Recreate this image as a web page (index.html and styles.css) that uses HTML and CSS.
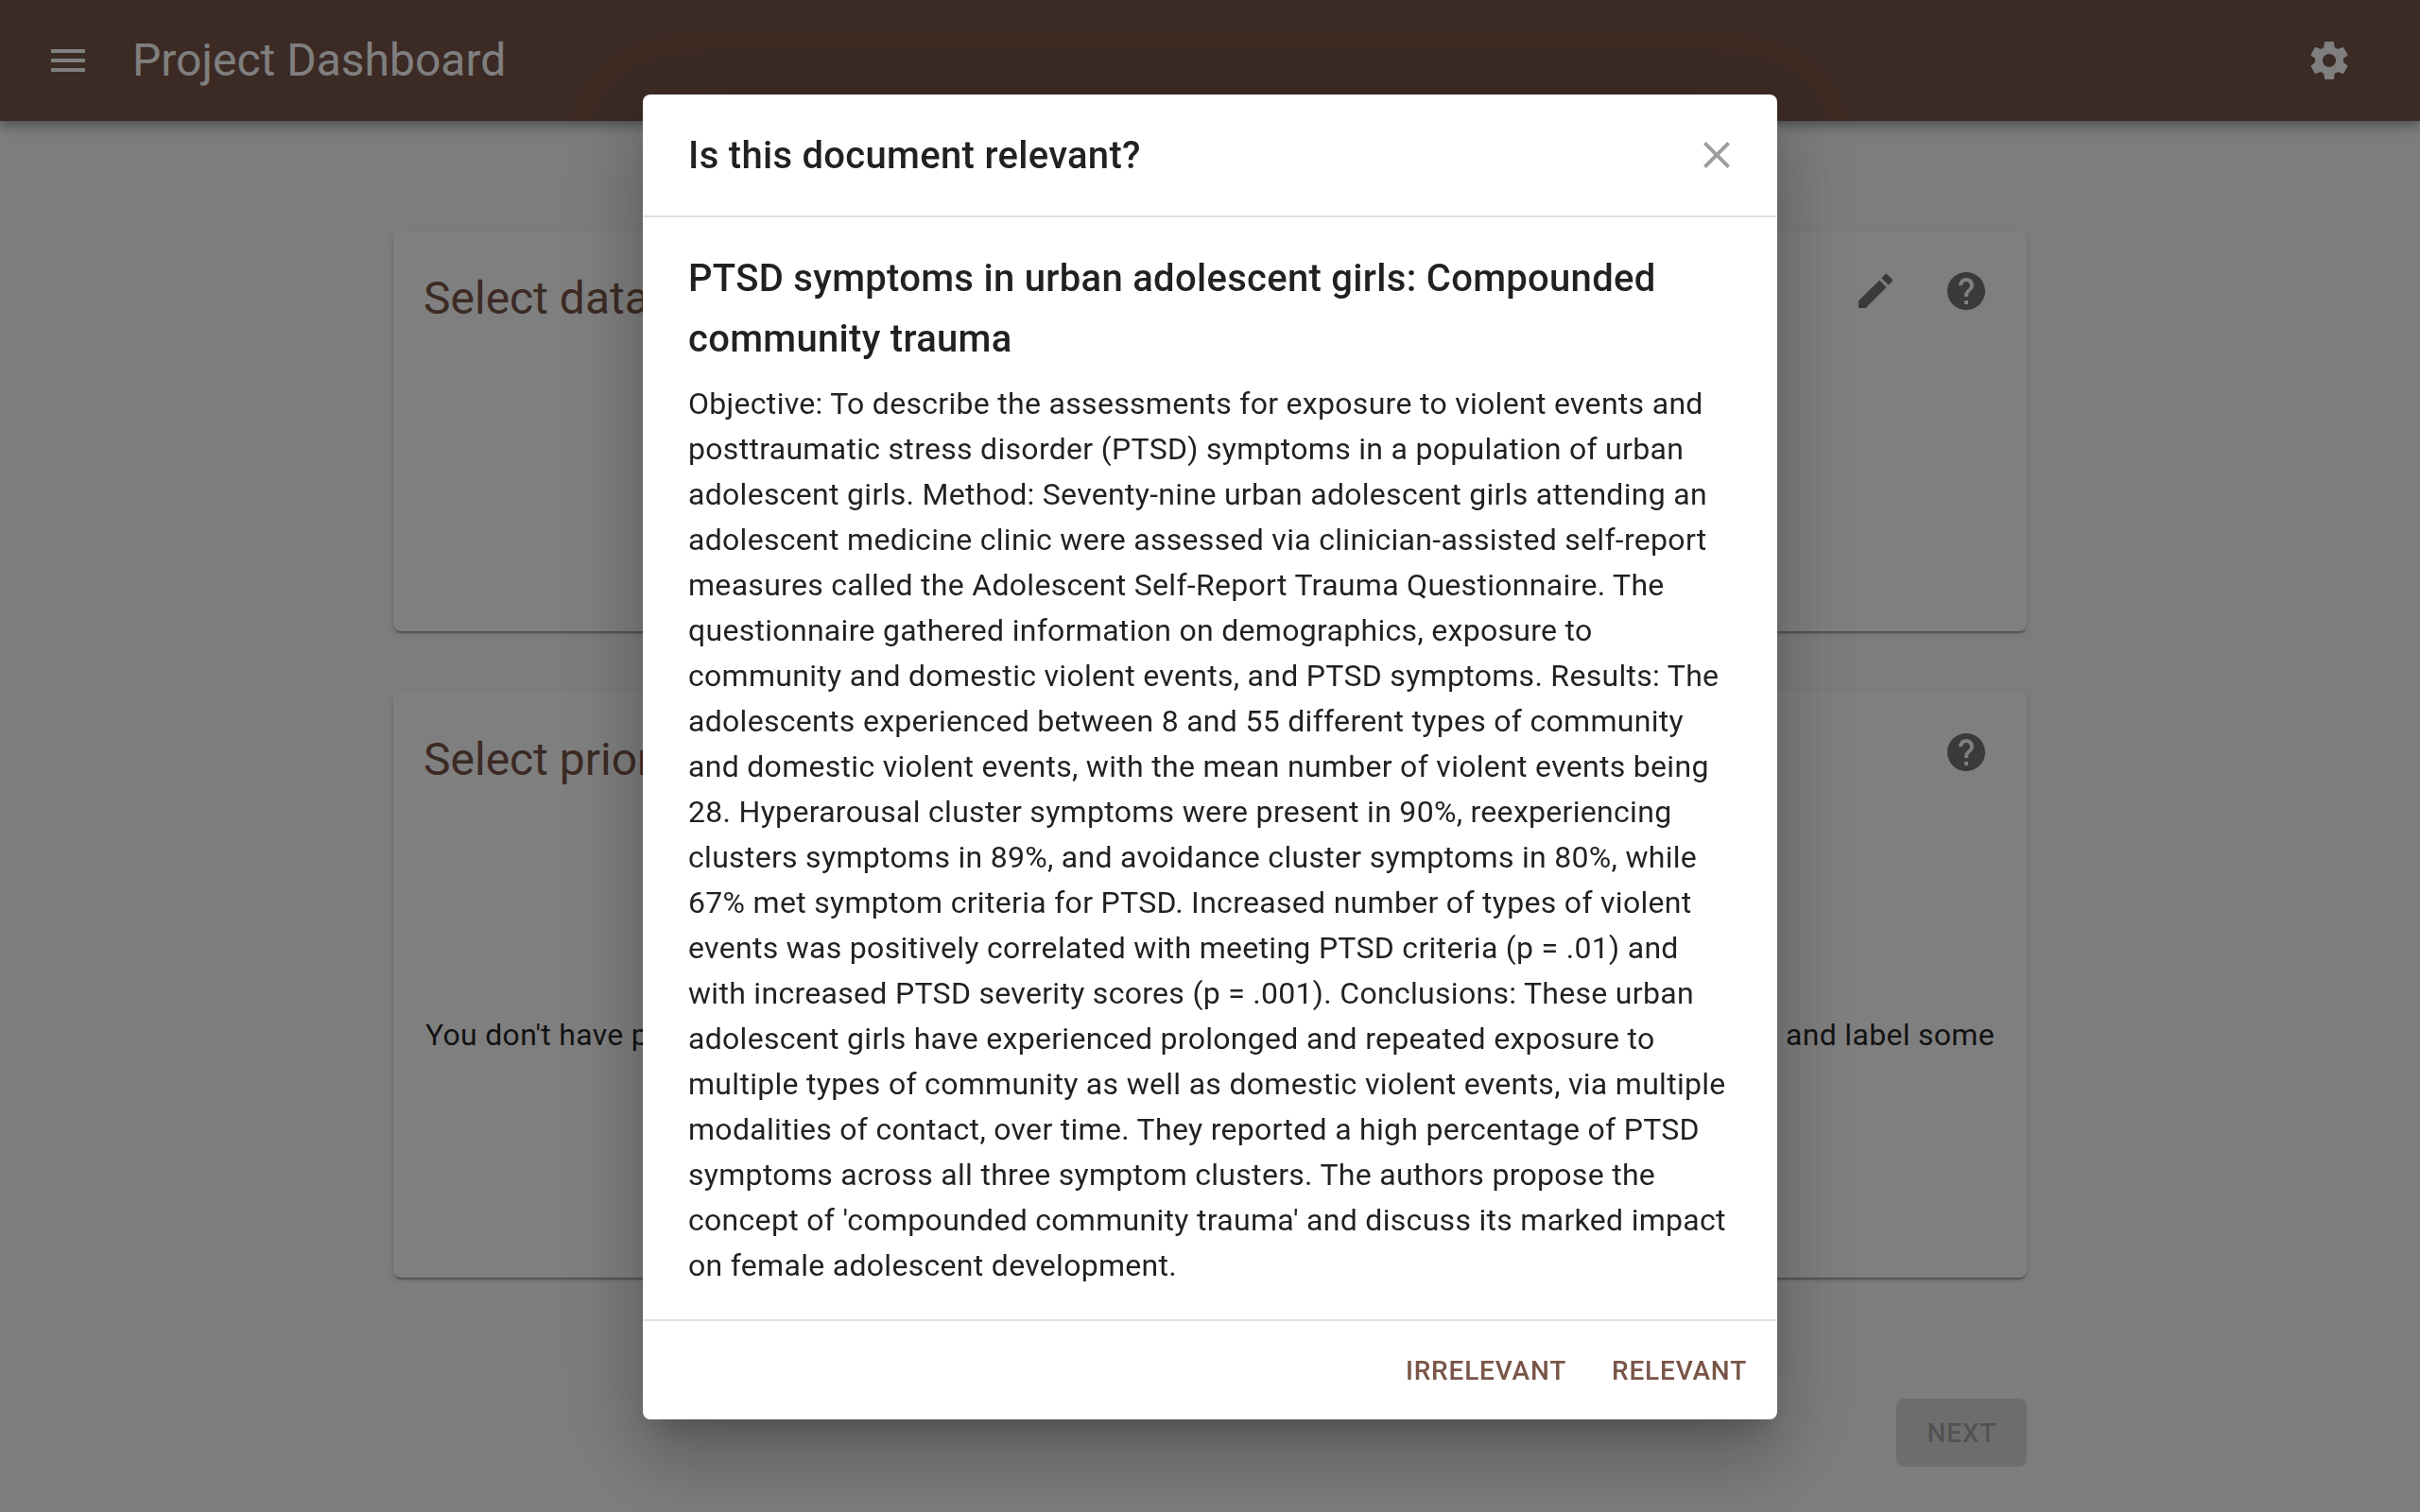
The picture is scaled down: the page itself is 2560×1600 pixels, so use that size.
FILE: index.html
```html
<!DOCTYPE html>
<html lang="en">
<head>
<meta charset="utf-8">
<title>Project Dashboard</title>
<link rel="stylesheet" href="styles.css">
</head>
<body>
<header class="app-bar">
  <svg class="icon" viewBox="0 0 24 24"><path d="M3 18h18v-2H3v2zm0-5h18v-2H3v2zm0-7v2h18V6H3z"/></svg>
  <h1 class="app-title">Project Dashboard</h1>
  <svg class="icon" viewBox="0 0 24 24"><path d="M19.43 12.98c.04-.32.07-.64.07-.98s-.03-.66-.07-.98l2.11-1.65c.19-.15.24-.42.12-.64l-2-3.46c-.12-.22-.39-.3-.61-.22l-2.49 1c-.52-.4-1.08-.73-1.69-.98l-.38-2.65C14.46 2.18 14.25 2 14 2h-4c-.25 0-.46.18-.49.42l-.38 2.65c-.61.25-1.17.59-1.69.98l-2.49-1c-.23-.09-.49 0-.61.22l-2 3.46c-.13.22-.07.49.12.64l2.11 1.65c-.04.32-.07.65-.07.98s.03.66.07.98l-2.11 1.65c-.19.15-.24.42-.12.64l2 3.46c.12.22.39.3.61.22l2.49-1c.52.4 1.08.73 1.69.98l.38 2.65c.03.24.24.42.49.42h4c.25 0 .46-.18.49-.42l.38-2.65c.61-.25 1.17-.59 1.69-.98l2.49 1c.23.09.49 0 .61-.22l2-3.46c.12-.22.07-.49-.12-.64l-2.11-1.65zM12 15.5c-1.93 0-3.5-1.57-3.5-3.5s1.57-3.5 3.5-3.5 3.5 1.57 3.5 3.5-1.57 3.5-3.5 3.5z"/></svg>
</header>
<main class="page">
  <section class="card card-dataset">
    <div class="card-header">
      <h2 class="card-title">Select dataset</h2>
      <div class="card-tools">
        <svg class="icon" viewBox="0 0 24 24"><path d="M3 17.25V21h3.75L17.81 9.94l-3.75-3.75L3 17.25zM20.71 7.04c.39-.39.39-1.02 0-1.41l-2.34-2.34a.9959.9959 0 0 0-1.41 0l-1.83 1.83 3.75 3.75 1.83-1.83z"/></svg>
        <svg class="icon" viewBox="0 0 24 24"><path d="M12 2C6.48 2 2 6.48 2 12s4.48 10 10 10 10-4.48 10-10S17.52 2 12 2zm1 17h-2v-2h2v2zm2.07-7.75l-.9.92C13.45 12.9 13 13.5 13 15h-2v-.5c0-1.1.45-2.1 1.17-2.83l1.24-1.26c.37-.36.59-.86.59-1.41 0-1.1-.9-2-2-2s-2 .9-2 2H8c0-2.21 1.79-4 4-4s4 1.79 4 4c0 .88-.36 1.68-.93 2.25z"/></svg>
      </div>
    </div>
  </section>
  <section class="card card-prior">
    <div class="card-header">
      <h2 class="card-title">Select prior knowledge</h2>
      <div class="card-tools">
        <svg class="icon" viewBox="0 0 24 24"><path d="M12 2C6.48 2 2 6.48 2 12s4.48 10 10 10 10-4.48 10-10S17.52 2 12 2zm1 17h-2v-2h2v2zm2.07-7.75l-.9.92C13.45 12.9 13 13.5 13 15h-2v-.5c0-1.1.45-2.1 1.17-2.83l1.24-1.26c.37-.36.59-.86.59-1.41 0-1.1-.9-2-2-2s-2 .9-2 2H8c0-2.21 1.79-4 4-4s4 1.79 4 4c0 .88-.36 1.68-.93 2.25z"/></svg>
      </div>
    </div>
    <p class="prior-note"><span>You don't have prior knowledge yet.</span><span>and label some</span></p>
  </section>
  <div class="page-actions"><button class="button button-disabled" disabled>Next</button></div>
</main>
<div class="backdrop">
  <div class="dialog" role="dialog">
    <div class="dialog-header">
      <h2 class="heading">Is this document relevant?</h2>
      <svg class="icon icon-close" viewBox="0 0 24 24"><path d="M19 6.41L17.59 5 12 10.59 6.41 5 5 6.41 10.59 12 5 17.59 6.41 19 12 13.41 17.59 19 19 17.59 13.41 12z"/></svg>
    </div>
    <div class="dialog-content">
      <h3 class="heading document-title">PTSD symptoms in urban adolescent girls: Compounded community trauma</h3>
      <p class="abstract">Objective: To describe the assessments for exposure to violent events and posttraumatic stress disorder (PTSD) symptoms in a population of urban adolescent girls. Method: Seventy-nine urban adolescent girls attending an adolescent medicine clinic were assessed via clinician-assisted self-report measures called the Adolescent Self-Report Trauma Questionnaire. The questionnaire gathered information on demographics, exposure to community and domestic violent events, and PTSD symptoms. Results: The adolescents experienced between 8 and 55 different types of community and domestic violent events, with the mean number of violent events being 28. Hyperarousal cluster symptoms were present in 90%, reexperiencing clusters symptoms in 89%, and avoidance cluster symptoms in 80%, while 67% met symptom criteria for PTSD. Increased number of types of violent events was positively correlated with meeting PTSD criteria (p = .01) and with increased PTSD severity scores (p = .001). Conclusions: These urban adolescent girls have experienced prolonged and repeated exposure to multiple types of community as well as domestic violent events, via multiple modalities of contact, over time. They reported a high percentage of PTSD symptoms across all three symptom clusters. The authors propose the concept of 'compounded community trauma' and discuss its marked impact on female adolescent development.</p>
    </div>
    <div class="dialog-actions">
      <button class="button">Irrelevant</button>
      <button class="button">Relevant</button>
    </div>
  </div>
</div>
</body>
</html>
```
FILE: styles.css
```css
* { box-sizing: border-box; }

body {
  margin: 0;
  height: 1600px;
  overflow: hidden;
  background: #fafafa;
  color: rgba(0, 0, 0, 0.87);
  font-family: Roboto, sans-serif;
  font-size: 32px;
  line-height: 48px;
  letter-spacing: 0.3px;
}

h1, h2, h3, p { margin: 0; }

.icon {
  display: block;
  flex: none;
  width: 48px;
  height: 48px;
  fill: currentColor;
}

.app-bar {
  position: relative;
  display: flex;
  align-items: center;
  height: 128px;
  padding: 0 72px 0 48px;
  background: #795548;
  color: #fff;
  box-shadow: 0 4px 8px -2px rgba(0, 0, 0, 0.2), 0 8px 10px rgba(0, 0, 0, 0.14), 0 2px 20px rgba(0, 0, 0, 0.12);
}

.app-title {
  flex: 1;
  margin-left: 44px;
  font-size: 48px;
  font-weight: 400;
  line-height: 64px;
  letter-spacing: 0;
}

.page {
  width: 1728px;
  margin: 0 auto;
  padding-top: 116px;
}

.card {
  padding: 32px;
  border-radius: 8px;
  background: #fff;
  box-shadow: 0 4px 2px -2px rgba(0, 0, 0, 0.2), 0 2px 2px rgba(0, 0, 0, 0.14), 0 2px 6px rgba(0, 0, 0, 0.12);
}

.card-dataset { height: 424px; }

.card-prior {
  height: 620px;
  margin-top: 64px;
}

.card-header {
  display: flex;
  justify-content: space-between;
}

.card-title {
  padding-top: 8px;
  color: #795548;
  font-size: 48px;
  font-weight: 400;
  line-height: 64px;
  letter-spacing: 0;
}

.card-tools {
  display: flex;
  gap: 48px;
  padding: 8px 8px 0 0;
  color: rgba(0, 0, 0, 0.54);
}

.prior-note {
  display: flex;
  justify-content: space-between;
  margin-top: 235px;
  padding: 0 2px;
}

.page-actions {
  display: flex;
  justify-content: flex-end;
  margin-top: 128px;
}

.button {
  height: 72px;
  padding: 2px 16px 0;
  border: 0;
  border-radius: 8px;
  background: none;
  color: #795548;
  font: 500 28px/48px Roboto, sans-serif;
  letter-spacing: 0.02857em;
  text-transform: uppercase;
}

.button-disabled {
  padding: 2px 32px 0;
  background: rgba(0, 0, 0, 0.12);
  color: rgba(0, 0, 0, 0.26);
}

.backdrop {
  position: fixed;
  inset: 0;
  display: flex;
  align-items: center;
  justify-content: center;
  background: rgba(0, 0, 0, 0.5);
}

.dialog {
  width: 1200px;
  margin-top: 2px;
  border-radius: 8px;
  background: #fff;
  box-shadow: 0 22px 30px -14px rgba(0, 0, 0, 0.2), 0 48px 76px 6px rgba(0, 0, 0, 0.14), 0 18px 92px 16px rgba(0, 0, 0, 0.12);
}

.dialog-header {
  display: flex;
  align-items: center;
  justify-content: space-between;
  height: 128px;
  padding: 0 40px 0 48px;
}

.heading {
  padding-top: 1px;
  font-size: 40px;
  font-weight: 500;
  line-height: 64px;
  letter-spacing: 0.0075em;
}

.dialog-header .heading { padding-top: 2px; }

.icon-close { color: #9e9e9e; }

.dialog-content {
  padding: 32px 48px 33px;
  border-top: 2px solid #e0e0e0;
  border-bottom: 2px solid #e0e0e0;
}

.document-title { margin-bottom: 12px; }

.dialog-actions {
  display: flex;
  justify-content: flex-end;
  gap: 16px;
  padding: 16px;
}
```
